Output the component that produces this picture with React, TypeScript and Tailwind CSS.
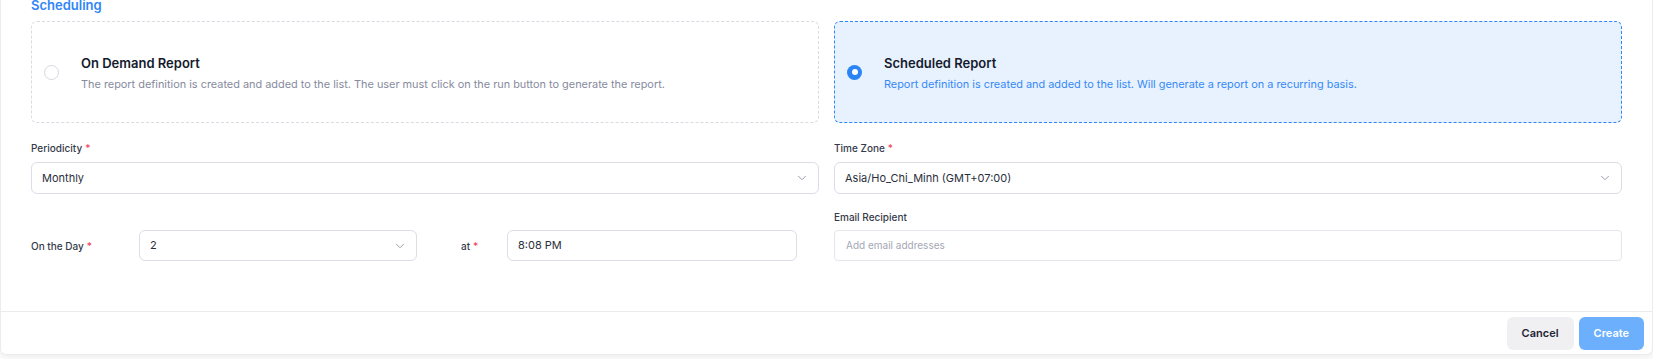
import { ChevronDown } from 'lucide-react'

// ── Small pieces ───────────────────────────────────────────────────────────────

function Req() {
  return <span className="text-[#f0445e] ml-[3px]">*</span>
}

function FieldLabel({ children, required }: { children: React.ReactNode; required?: boolean }) {
  return (
    <div className="text-[10px] leading-[12px] font-medium text-[#363b4c]">
      {children}
      {required && <Req />}
    </div>
  )
}

function SelectBox({ value, className = '' }: { value: string; className?: string }) {
  return (
    <div
      className={`flex items-center justify-between border border-[#dcdde7] rounded-md bg-white pl-[10px] pr-[9px] ${className}`}
    >
      <span className="text-[11px] text-[#2b2f3d]">{value}</span>
      <ChevronDown size={14} strokeWidth={1.5} className="text-[#8b8fa3]" />
    </div>
  )
}

interface OptionCardProps {
  title: string
  description: string
  selected?: boolean
}

function OptionCard({ title, description, selected }: OptionCardProps) {
  return (
    <div
      className={`h-[102px] rounded-md border border-dashed flex items-center pl-[12px] gap-[22px] ${
        selected ? 'border-[#2f86f6] bg-[#e8f2fe]' : 'border-[#d9dbe2] bg-white'
      }`}
    >
      {selected ? (
        <div className="w-[15px] h-[15px] rounded-full bg-[#2a84f5] flex items-center justify-center shrink-0">
          <div className="w-[6px] h-[6px] rounded-full bg-white" />
        </div>
      ) : (
        <div className="w-[15px] h-[15px] rounded-full border border-[#d5d8e0] bg-white shrink-0" />
      )}
      <div className="pt-[1px]">
        <div className="text-[13px] leading-[16px] font-semibold text-[#151a2d]">{title}</div>
        <div
          className={`mt-[6px] text-[10.9px] leading-[14px] ${
            selected ? 'text-[#3689f6]' : 'text-[#868b9e]'
          }`}
        >
          {description}
        </div>
      </div>
    </div>
  )
}

// ── Page ───────────────────────────────────────────────────────────────────────

export default function App() {
  return (
    <div className="min-h-screen bg-[#fcfcfc] font-[Inter,sans-serif] overflow-hidden">
      <div className="bg-white border-x border-b border-[#ececec] rounded-b-md shadow-[0_2px_6px_rgba(0,0,0,0.06)]">
        <div className="px-[30px]">
          <h3 className="-mt-[3px] text-[13px] leading-[16px] font-semibold text-[#2f86f6]">
            Scheduling
          </h3>

          {/* ── Report type ── */}
          <div className="grid grid-cols-2 gap-x-[15px] mt-[8px]">
            <OptionCard
              title="On Demand Report"
              description="The report definition is created and added to the list. The user must click on the run button to generate the report."
            />
            <OptionCard
              selected
              title="Scheduled Report"
              description="Report definition is created and added to the list. Will generate a report on a recurring basis."
            />
          </div>

          {/* ── Periodicity / time zone ── */}
          <div className="grid grid-cols-2 gap-x-[15px] mt-[19px]">
            <div>
              <FieldLabel required>Periodicity</FieldLabel>
              <SelectBox value="Monthly" className="mt-[8px] h-[32px]" />
            </div>
            <div>
              <FieldLabel required>Time Zone</FieldLabel>
              <SelectBox value="Asia/Ho_Chi_Minh (GMT+07:00)" className="mt-[8px] h-[32px]" />
            </div>
          </div>

          {/* ── Day / time / email ── */}
          <div className="grid grid-cols-2 gap-x-[15px] mt-[17px]">
            <div className="self-end flex items-center h-[31px]">
              <div className="w-[108px]">
                <FieldLabel required>On the Day</FieldLabel>
              </div>
              <SelectBox value="2" className="w-[278px] h-[31px]" />
              <div className="w-[90px] pl-[44px]">
                <FieldLabel required>at</FieldLabel>
              </div>
              <div className="w-[290px] h-[31px] flex items-center border border-[#dcdde7] rounded-md pl-[10px]">
                <span className="text-[11px] text-[#2b2f3d]">8:08 PM</span>
              </div>
            </div>
            <div>
              <FieldLabel>Email Recipient</FieldLabel>
              <div className="mt-[7px] h-[31px] flex items-center border border-[#e5e6eb] rounded-[4px] pl-[11px]">
                <span className="text-[10px] text-[#a3a7b4]">Add email addresses</span>
              </div>
            </div>
          </div>
        </div>

        {/* ── Footer ── */}
        <div className="mt-[50px] border-t border-[#ececec] flex justify-end gap-[5px] pt-[5px] pb-[4px] pr-[8px]">
          <button className="h-[33px] px-[15px] rounded-md bg-[#f0f0f3] text-[11px] font-semibold text-[#1f2433]">
            Cancel
          </button>
          <button className="h-[33px] px-[15px] rounded-md bg-[#6cb0fd] text-[11px] font-semibold text-white">
            Create
          </button>
        </div>
      </div>
    </div>
  )
}
